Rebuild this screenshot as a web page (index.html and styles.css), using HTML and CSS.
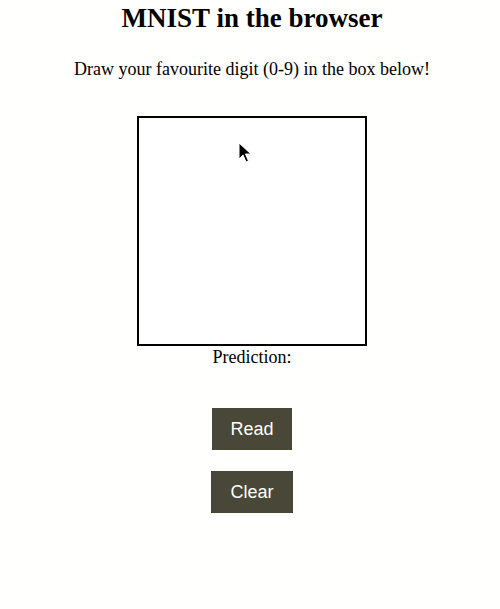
FILE: index.html
```html
<!DOCTYPE html>
<html>
<head>
<meta charset="utf-8">
<link rel="stylesheet" href="styles.css">
</head>
<body>
<main class="page">
  <h1 class="title">MNIST in the browser</h1>
  <p class="lead">Draw your favourite digit (0-9) in the box below!</p>
  <div class="board">
    <div class="canvas">
      <svg class="cursor" width="14" height="22" viewBox="0 0 14 22">
        <path d="M1 1 L1 17 L5 13 L8 20 L10.5 19 L7.5 12 L13 12 Z" fill="#000" stroke="#fff" stroke-width="1"/>
      </svg>
    </div>
    <div class="prediction">Prediction:</div>
  </div>
  <div class="actions">
    <button class="btn btn-read">Read</button>
    <button class="btn btn-clear">Clear</button>
  </div>
</main>
</body>
</html>
```
FILE: styles.css
```css
html, body {
  margin: 0;
  padding: 0;
  background: #fffffd;
}
.page {
  padding-left: 4px;
  display: flex;
  flex-direction: column;
  align-items: center;
  font-family: "Liberation Serif", "Times New Roman", serif;
  color: #000;
}
.title {
  margin: 2px 0 0;
  font-size: 27px;
  font-weight: bold;
  line-height: 32px;
}
.lead {
  margin: 24px 0 0;
  font-size: 18px;
  line-height: 22px;
}
.board {
  margin-top: 36px;
  display: flex;
  flex-direction: column;
  align-items: center;
}
.canvas {
  position: relative;
  width: 226px;
  height: 226px;
  border: 2px solid #000;
  background: #fff;
}
.cursor {
  position: absolute;
  left: 99px;
  top: 24px;
}
.prediction {
  font-size: 18px;
  line-height: 22px;
}
.actions {
  margin-top: 40px;
  display: flex;
  flex-direction: column;
  align-items: center;
  gap: 21px;
}
.btn {
  border: none;
  background: #494737;
  color: #fff;
  font-family: "Liberation Sans", Arial, sans-serif;
  font-size: 18px;
  height: 42px;
  padding: 0 18px;
}
.btn-clear {
  padding: 0 19px;
}
```
